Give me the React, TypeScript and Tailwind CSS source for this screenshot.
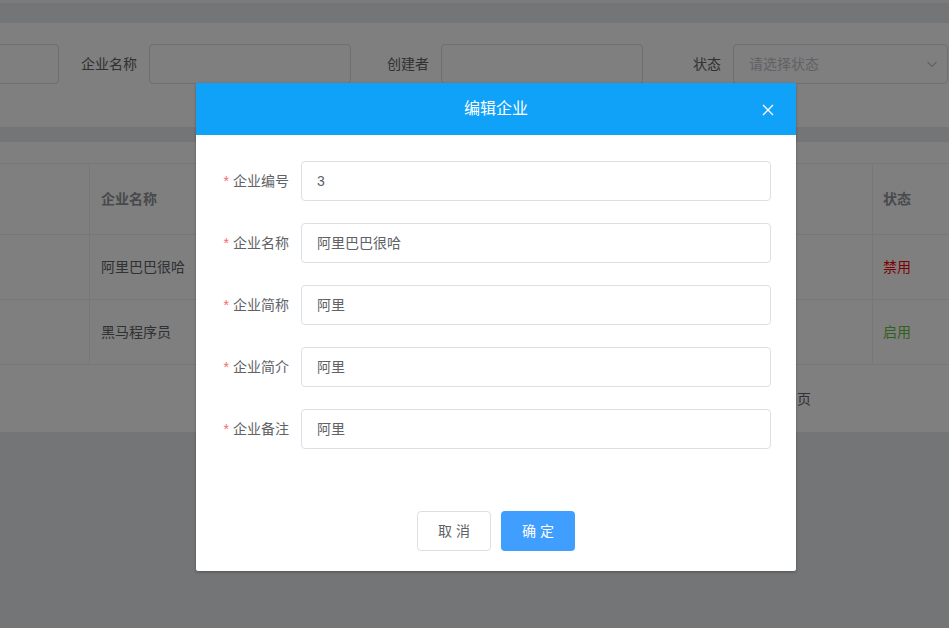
import React from "react";

const fields = [
  { label: "企业编号", value: "3" },
  { label: "企业名称", value: "阿里巴巴很哈" },
  { label: "企业简称", value: "阿里" },
  { label: "企业简介", value: "阿里" },
  { label: "企业备注", value: "阿里" },
];

const rows = [
  { name: "阿里巴巴很哈", status: "禁用", color: "text-[#ff0000]" },
  { name: "黑马程序员", status: "启用", color: "text-[#67c23a]" },
];

function SearchItem({ label, children }: { label: string; children: React.ReactNode }) {
  return (
    <div className="flex items-center mr-[10px] shrink-0">
      <label className="w-[80px] pr-[12px] text-right text-[14px] text-[#606266]">{label}</label>
      {children}
    </div>
  );
}

export default function App() {
  return (
    <div className="relative w-[949px] h-[628px] overflow-hidden bg-[#e8eaee] font-['Liberation_Sans','Noto_Sans_CJK_SC',sans-serif] leading-[20px]">
      {/* page behind the dialog */}
      <div className="h-[3px] bg-[#f6f6f6]" />
      <div className="mt-[20px] h-[104px] bg-white pt-[21px] flex items-start -ml-[141px]">
        <div className="flex items-center mr-[10px] shrink-0">
          <div className="w-[200px] h-[40px] border border-[#dcdfe6] rounded-[4px]" />
        </div>
        <SearchItem label="企业名称">
          <div className="w-[202px] h-[40px] border border-[#dcdfe6] rounded-[4px]" />
        </SearchItem>
        <SearchItem label="创建者">
          <div className="w-[202px] h-[40px] border border-[#dcdfe6] rounded-[4px]" />
        </SearchItem>
        <SearchItem label="状态">
          <div className="w-[215px] h-[40px] border border-[#dcdfe6] rounded-[4px] flex items-center justify-between pl-[15px] pr-[9px]">
            <span className="text-[14px] text-[#c0c4cc]">请选择状态</span>
            <svg width="12" height="12" viewBox="0 0 12 12" fill="none" stroke="#c0c4cc" strokeWidth="1.2">
              <path d="M1.5 4l4.5 4.5L10.5 4" />
            </svg>
          </div>
        </SearchItem>
      </div>

      <div className="mt-[15px] h-[290px] bg-white pt-[21px]">
        <div className="border-t border-[#ebeef5]">
          <div className="flex h-[71px] border-b border-[#ebeef5] text-[14px] font-bold text-[#909399]">
            <div className="w-[90px] border-r border-[#ebeef5]" />
            <div className="w-[180px] border-r border-[#ebeef5] flex items-center pl-[11px]">企业名称</div>
            <div className="w-[200px] border-r border-[#ebeef5]" />
            <div className="w-[200px] border-r border-[#ebeef5]" />
            <div className="w-[203px] border-r border-[#ebeef5]" />
            <div className="flex-1 flex items-center pl-[10px]">状态</div>
          </div>
          {rows.map((r) => (
            <div key={r.name} className="flex h-[65px] border-b border-[#ebeef5] text-[14px] text-[#606266]">
              <div className="w-[90px] border-r border-[#ebeef5]" />
              <div className="w-[180px] border-r border-[#ebeef5] flex items-center pl-[11px]">{r.name}</div>
              <div className="w-[200px] border-r border-[#ebeef5]" />
              <div className="w-[200px] border-r border-[#ebeef5]" />
              <div className="w-[203px] border-r border-[#ebeef5]" />
              <div className={`flex-1 flex items-center pl-[10px] ${r.color}`}>{r.status}</div>
            </div>
          ))}
          <div className="flex items-center h-[68px] text-[14px] text-[#606266]">
            <div className="w-[797px] flex justify-end pr-[6px] gap-2">
              <span>共 2 条</span>
              <span>前往</span>
              <span className="w-[46px] h-[28px] border border-[#dcdfe6] rounded-[3px] flex items-center justify-center">1</span>
            </div>
            <span>页</span>
          </div>
        </div>
      </div>

      {/* mask */}
      <div className="absolute inset-0 bg-black/50" />

      {/* dialog */}
      <div className="absolute left-[196px] top-[83px] w-[600px] bg-white rounded-[2px] shadow-[0_1px_3px_rgba(0,0,0,0.3)]">
        <div className="h-[52px] bg-[#10a1f9] flex items-center justify-center relative">
          <span className="text-[16px] text-white">编辑企业</span>
          <button className="absolute right-[22px] top-[21px] w-[12px] h-[12px]">
            <svg width="12" height="12" viewBox="0 0 12 12" fill="none" stroke="#ffffff" strokeWidth="1.4">
              <path d="M1 1l10 10M11 1L1 11" />
            </svg>
          </button>
        </div>
        <div className="pt-[26px] pb-[20px] pl-[5px] pr-[25px]">
          {fields.map((f) => (
            <div key={f.label} className="flex items-center mb-[22px]">
              <label className="w-[100px] pr-[12px] text-right text-[14px] text-[#606266]">
                <span className="text-[#f56c6c] mr-[4px]">*</span>
                {f.label}
              </label>
              <div className="flex-1 h-[40px] border border-[#dcdfe6] rounded-[4px] flex items-center px-[15px] text-[14px] text-[#606266]">
                {f.value}
              </div>
            </div>
          ))}
        </div>
        <div className="flex justify-center gap-[10px] pt-[20px] pb-[20px]">
          <button className="w-[74px] h-[40px] border border-[#dcdfe6] rounded-[4px] bg-white text-[14px] text-[#606266]">取 消</button>
          <button className="w-[74px] h-[40px] rounded-[4px] bg-[#409eff] text-[14px] text-white">确 定</button>
        </div>
      </div>
    </div>
  );
}
